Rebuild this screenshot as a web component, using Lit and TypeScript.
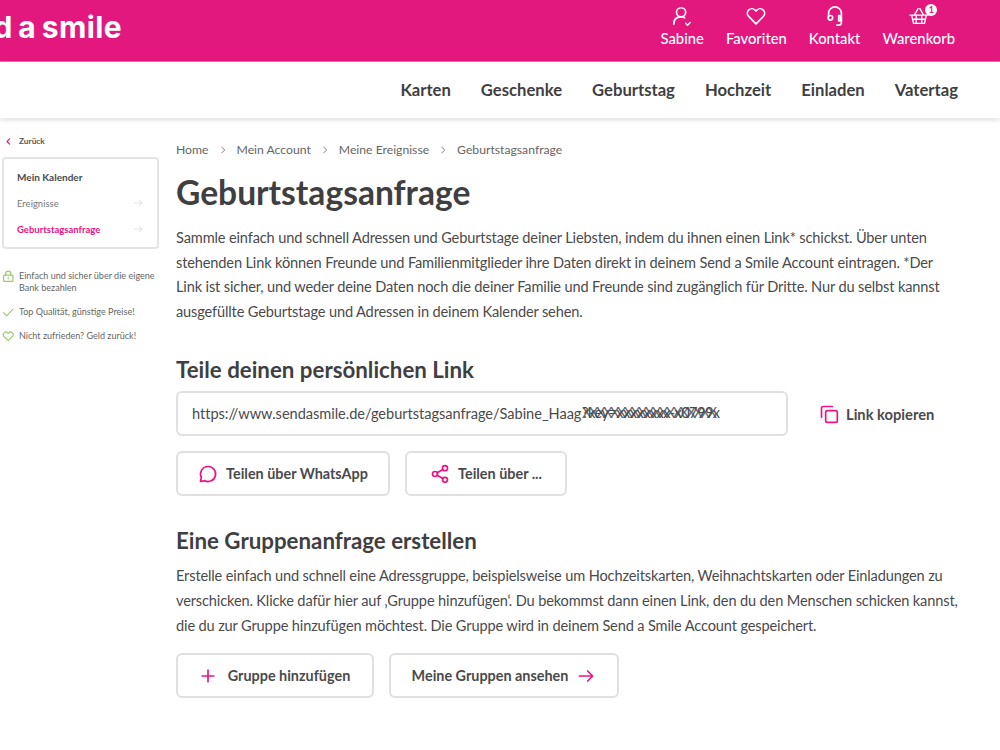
import { LitElement, html, css, svg } from "lit";
import { customElement } from "lit/decorators.js";

const ic = (body: unknown, size = 20, sw = 2) => html`<svg width=${size} height=${size} viewBox="0 0 24 24" fill="none" stroke="currentColor" stroke-width=${sw} stroke-linecap="round" stroke-linejoin="round">${body}</svg>`;

@customElement("app-root")
export class AppRoot extends LitElement {
  static styles = css`
    :host { display: block; height: 750px; overflow: hidden; background: #fff; color: #3f3f41; font-family: "Lato", "Open Sans", sans-serif; }
    .top { height: 62px; background: #e2187f; color: #fff; display: flex; justify-content: space-between; border-bottom: 1px solid #ec6aa9; box-sizing: border-box; }
    .logo { width: 122px; overflow: hidden; display: flex; justify-content: flex-end; font: 700 30px/54px "Inter", sans-serif; white-space: nowrap; letter-spacing: 0.4px; word-spacing: -2px; }
    .tools { display: flex; gap: 22px; padding: 5px 45px 0 0; }
    .tool { display: flex; flex-direction: column; align-items: center; font-size: 14.8px; font-weight: 500; line-height: 20px; position: relative; }
    .tool svg { display: block; margin-bottom: 1px; }
    .badge { position: absolute; top: -1px; left: 43px; width: 12px; height: 12px; border-radius: 50%; background: #fff; color: #e2187f; font-size: 9px; line-height: 12px; text-align: center; font-weight: 700; font-style: normal; }
    .nav { height: 56px; display: flex; justify-content: flex-end; align-items: center; gap: 30px; padding: 0 42px 1px 0; box-sizing: border-box; box-shadow: 0 2px 5px rgba(0,0,0,.13); font-size: 16.65px; font-weight: 700; position: relative; }
    .body { display: grid; grid-template-columns: 176px 784px; }
    .side { padding: 17px 0 0 2px; font-size: 9.5px; color: #666; }
    .back { display: flex; align-items: center; gap: 6px; padding-left: 2px; height: 12px; font-weight: 700; font-size: 8.3px; color: #555; }
    .pink { color: #ec1383; display: flex; }
    .card { width: 157px; height: 92px; margin-top: 10px; box-sizing: border-box; border: 2px solid #e4e4e4; border-radius: 4px; padding: 11px 13px; }
    .card h4 { margin: 0 0 6px; font-size: 10px; line-height: 14px; font-weight: 700; color: #4b4b4d; }
    .row { display: flex; justify-content: space-between; align-items: center; height: 26px; font-size: 9.5px; color: #777; }
    .row svg { color: #d8d8d8; }
    .row.on { color: #ec1383; font-weight: 700; }
    .trust { margin-top: 21px; display: flex; flex-direction: column; gap: 11.5px; width: 158px; }
    .t { display: grid; grid-template-columns: 17px 1fr; font-size: 9.05px; line-height: 12px; color: #666; }
    .t svg { color: #9ccb6e; }
    .main { padding-top: 23px; }
    .crumb { display: flex; gap: 9px; align-items: center; font-size: 12.2px; line-height: 18px; color: #666; }
    .crumb svg { color: #666; }
    h1 { margin: 11px 0 0; font-size: 33.6px; line-height: 44px; font-weight: 700; color: #3f3f41; }
    p { margin: 0; font-size: 14.6px; letter-spacing: -0.145px; line-height: 24.6px; color: #4a4a4c; white-space: nowrap; }
    .p1 { margin-top: 12px; }
    h2 { margin: 0; font-size: 22.3px; line-height: 28px; font-weight: 700; color: #3f3f41; }
    .h-a { margin-top: 32px; }
    .linkrow { display: flex; align-items: center; margin-top: 7px; }
    .input { width: 612px; height: 45px; box-sizing: border-box; border: 2px solid #e0e0e0; border-radius: 6px; padding-left: 14px; display: flex; align-items: center; font-size: 14.6px; letter-spacing: -0.04px; color: #4a4a4c; white-space: nowrap; position: relative; }
    .x { position: absolute; left: 404px; top: 10px; line-height: 20px; letter-spacing: -0.55px; }
    .x2 { position: absolute; left: 404px; top: 10px; line-height: 20px; letter-spacing: -2.5px; opacity: .85; }
    .copy { display: flex; align-items: center; gap: 7px; margin-left: 31px; font-size: 14.7px; font-weight: 700; color: #4a4a4c; }
    .copy svg { color: #ec1383; }
    .btns { display: flex; gap: 15px; margin-top: 15px; }
    .btn { height: 45px; box-sizing: border-box; border: 2px solid #e0e0e0; border-radius: 6px; display: flex; align-items: center; justify-content: center; gap: 8px; font-size: 14.4px; font-weight: 700; color: #4a4a4c; white-space: nowrap; }
    .btn svg { color: #ec1383; }
    .h-b { margin-top: 31px; }
    .p2 { margin-top: 9px; }
    .p2 + .btns { margin-top: 15px; }
    .b1 { width: 214px; } .b2 { width: 162px; } .b3 { width: 198px; gap: 10px; padding-right: 2px; } .b4 { width: 230px; }
  `;

  render() {
    return html`
      <div class="top">
        <div class="logo"><span>Send a smile</span></div>
        <div class="tools">
          <div class="tool">${ic(svg`<circle cx="11" cy="8" r="5"/><path d="M3 21c0-5 3-8 8-8 1.500 0 3 .4 4 1"/><path d="M16 20l2 2 3-3" stroke-width="1.500"/>`, 22, 1.8)}<span>Sabine</span></div>
          <div class="tool">${ic(svg`<path d="M12 20.500 4 12.500a5 5 0 0 1 0-7 5 5 0 0 1 7 0l1 1 1-1a5 5 0 0 1 7 0 5 5 0 0 1 0 7z"/>`, 22, 1.8)}<span>Favoriten</span></div>
          <div class="tool">${ic(svg`<path d="M5 13V9a7 7 0 0 1 14 0v10a3 3 0 0 1-3 3h-2"/><circle cx="7" cy="14" r="2.500"/><path d="M16 11.500h2v6h-2z"/>`, 22, 1.8)}<span>Kontakt</span></div>
          <div class="tool">${ic(svg`<path d="M2 11h20M4 11l2 9h12l2-9M7 11l4-7M17 11l-4-7M9 11v9M15 11v9M5 15.500h14"/>`, 22, 1.5)}<span>Warenkorb</span><i class="badge">1</i></div>
        </div>
      </div>
      <div class="nav"><span>Karten</span><span>Geschenke</span><span>Geburtstag</span><span>Hochzeit</span><span>Einladen</span><span>Vatertag</span></div>
      <div class="body">
        <aside class="side">
          <div class="back"><span class="pink">${ic(svg`<path d="M15 5l-7 7 7 7"/>`, 9, 3)}</span>Zurück</div>
          <div class="card">
            <h4>Mein Kalender</h4>
            <div class="row"><span>Ereignisse</span>${ic(svg`<path d="M4 12h16M14 6l6 6-6 6"/>`, 12, 1.5)}</div>
            <div class="row on"><span>Geburtstagsanfrage</span>${ic(svg`<path d="M4 12h16M14 6l6 6-6 6"/>`, 12, 1.5)}</div>
          </div>
          <div class="trust">
            <div class="t">${ic(svg`<rect x="3" y="10" width="18" height="12" rx="2"/><path d="M7 10V7a5 5 0 0 1 10 0v3M12 15v2"/>`, 12.5, 2.5)}<span>Einfach und sicher über die eigene Bank bezahlen</span></div>
            <div class="t">${ic(svg`<path d="M3 13l6 6L21 6"/>`, 12.5, 2.2)}<span>Top Qualität, günstige Preise!</span></div>
            <div class="t">${ic(svg`<path d="M12 20.500 4 12.500a5 5 0 0 1 0-7 5 5 0 0 1 7 0l1 1 1-1a5 5 0 0 1 7 0 5 5 0 0 1 0 7z"/>`, 12.5, 2.2)}<span>Nicht zufrieden? Geld zurück!</span></div>
          </div>
        </aside>
        <main class="main">
          <div class="crumb"><span>Home</span>${ic(svg`<path d="M9 5l7 7-7 7"/>`, 10)}<span>Mein Account</span>${ic(svg`<path d="M9 5l7 7-7 7"/>`, 10)}<span>Meine Ereignisse</span>${ic(svg`<path d="M9 5l7 7-7 7"/>`, 10)}<span>Geburtstagsanfrage</span></div>
          <h1>Geburtstagsanfrage</h1>
          <p class="p1">Sammle einfach und schnell Adressen und Geburtstage deiner Liebsten, indem du ihnen einen Link* schickst. Über unten<br>stehenden Link können Freunde und Familienmitglieder ihre Daten direkt in deinem Send a Smile Account eintragen. *Der<br>Link ist sicher, und weder deine Daten noch die deiner Familie und Freunde sind zugänglich für Dritte. Nur du selbst kannst<br>ausgefüllte Geburtstage und Adressen in deinem Kalender sehen.</p>
          <h2 class="h-a">Teile deinen persönlichen Link</h2>
          <div class="linkrow">
            <div class="input"><span>https://www.sendasmile.de/geburtstagsanfrage/Sabine_Haag</span><span class="x">?key=xxxxxxxx-x0799x</span><span class="x2">XXXXXXXXXXXXXXXXXXX</span></div>
            <div class="copy">${ic(svg`<rect x="8" y="8" width="14" height="14" rx="2"/><path d="M16 3H5a2 2 0 0 0-2 2v11"/>`, 20)}Link kopieren</div>
          </div>
          <div class="btns">
            <div class="btn b1">${ic(svg`<path d="M12 3a9 9 0 1 1-4 17l-5 1 1-5A9 9 0 0 1 12 3z"/>`, 20)}Teilen über WhatsApp</div>
            <div class="btn b2">${ic(svg`<circle cx="18" cy="5" r="3"/><circle cx="6" cy="12" r="3"/><circle cx="18" cy="19" r="3"/><path d="M8.600 10.500l6.800-4M8.600 13.500l6.800 4"/>`, 20)}Teilen über ...</div>
          </div>
          <h2 class="h-b">Eine Gruppenanfrage erstellen</h2>
          <p class="p2">Erstelle einfach und schnell eine Adressgruppe, beispielsweise um Hochzeitskarten, Weihnachtskarten oder Einladungen zu<br>verschicken. Klicke dafür hier auf ‚Gruppe hinzufügen‘. Du bekommst dann einen Link, den du den Menschen schicken kannst,<br>die du zur Gruppe hinzufügen möchtest. Die Gruppe wird in deinem Send a Smile Account gespeichert.</p>
          <div class="btns">
            <div class="btn b3">${ic(svg`<path d="M12 5v14M5 12h14"/>`, 20)}Gruppe hinzufügen</div>
            <div class="btn b4">Meine Gruppen ansehen${ic(svg`<path d="M4 12h16M14 6l6 6-6 6"/>`, 20)}</div>
          </div>
        </main>
      </div>`;
  }
}
